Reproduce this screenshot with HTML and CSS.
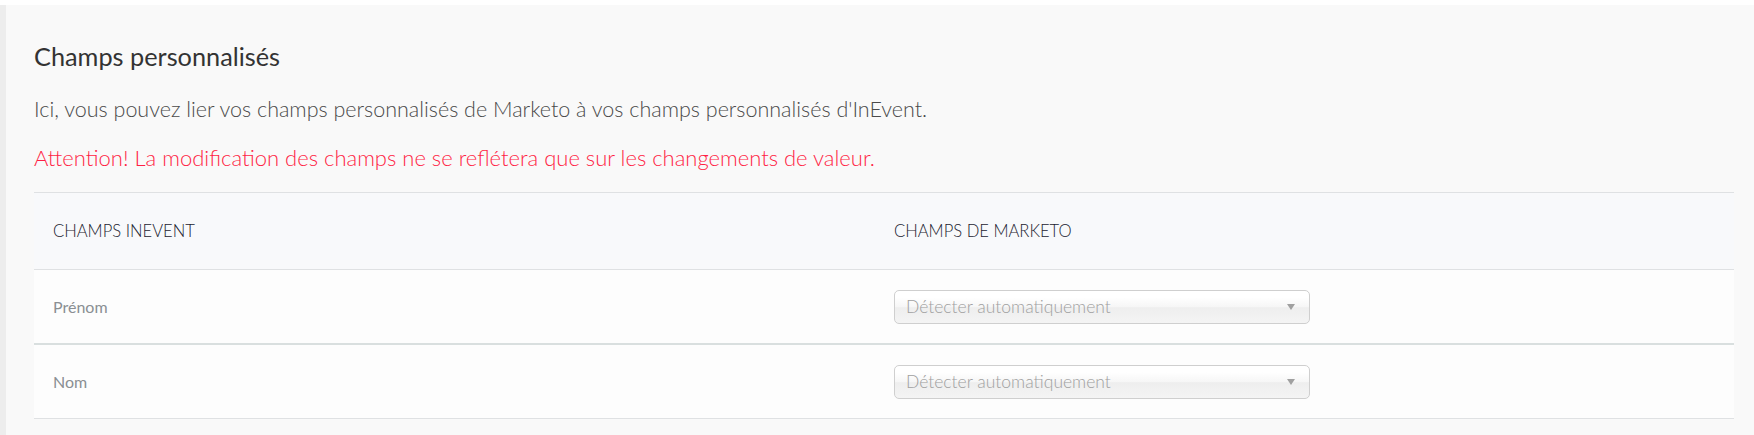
FILE: index.html
```html
<!DOCTYPE html>
<html lang="fr">
<head>
<meta charset="utf-8">
<title>Champs personnalisés</title>
<link rel="stylesheet" href="styles.css">
</head>
<body>
<div class="page">
  <section class="panel">
    <h2 class="title">Champs personnalisés</h2>
    <p class="desc">Ici, vous pouvez lier vos champs personnalisés de Marketo à vos champs personnalisés d'InEvent.</p>
    <p class="warn">Attention! La modification des champs ne se reflétera que sur les changements de valeur.</p>
    <div class="table">
      <div class="row head">
        <div class="cell">CHAMPS INEVENT</div>
        <div class="cell">CHAMPS DE MARKETO</div>
      </div>
      <div class="row body thick">
        <div class="cell label">Prénom</div>
        <div class="cell">
          <div class="select"><span>Détecter automatiquement</span><i class="arrow"></i></div>
        </div>
      </div>
      <div class="row body">
        <div class="cell label">Nom</div>
        <div class="cell">
          <div class="select"><span>Détecter automatiquement</span><i class="arrow"></i></div>
        </div>
      </div>
    </div>
  </section>
</div>
</body>
</html>
```
FILE: styles.css
```css
* { box-sizing: border-box; }
html, body { margin: 0; padding: 0; background: #ffffff; }
body { font-family: Lato, "Open Sans", "Liberation Sans", sans-serif; }
.page {
  padding-top: 5px;
  height: 435px;
  overflow: hidden;
}
.panel {
  border-left: 6px solid #ededed;
  background: #f9f9f9;
  padding: 36px 20px 0 28px;
  height: 430px;
}
.title {
  margin: 0 0 26px 0;
  font-size: 25.3px;
  line-height: 30px;
  font-weight: 400;
  color: #333333;
}
.desc {
  margin: 0 0 23px 0;
  font-size: 21.5px;
  line-height: 25px;
  font-weight: 300;
  color: #4a4a4a;
}
.warn {
  margin: 0 0 22px 0;
  font-size: 22px;
  line-height: 25px;
  font-weight: 300;
  color: #ff1f45;
}
.table {
  border-top: 1px solid #dfe1e3;
}
.row {
  display: grid;
  grid-template-columns: 841px 1fr;
  align-items: center;
  border-bottom: 1px solid #dfe1e3;
}
.row.head {
  height: 77px;
  background: #f8f9fb;
  font-size: 16.6px;
  font-weight: 300;
  color: #1c2430;
}
.row.body {
  height: 74px;
  background: #fdfdfd;
}
.row.thick {
  height: 75px;
  border-bottom: 2px solid #d9dfdf;
}
.cell { padding-left: 19px; }
.label {
  font-size: 16px;
  color: #8a8f93;
}
.select {
  width: 416px;
  height: 34px;
  border: 1px solid #cfcfcf;
  border-radius: 5px;
  background: linear-gradient(#ffffff 20%, #f6f6f6 50%, #eeeeee 52%, #f4f4f4 100%);
  display: flex;
  align-items: center;
  justify-content: space-between;
  padding: 0 14px 0 11px;
  font-size: 17.5px;
  font-weight: 300;
  color: #a0a0a0;
}
.arrow {
  width: 0;
  height: 0;
  border-left: 4px solid transparent;
  border-right: 4px solid transparent;
  border-top: 6px solid #a0a0a0;
}
```
